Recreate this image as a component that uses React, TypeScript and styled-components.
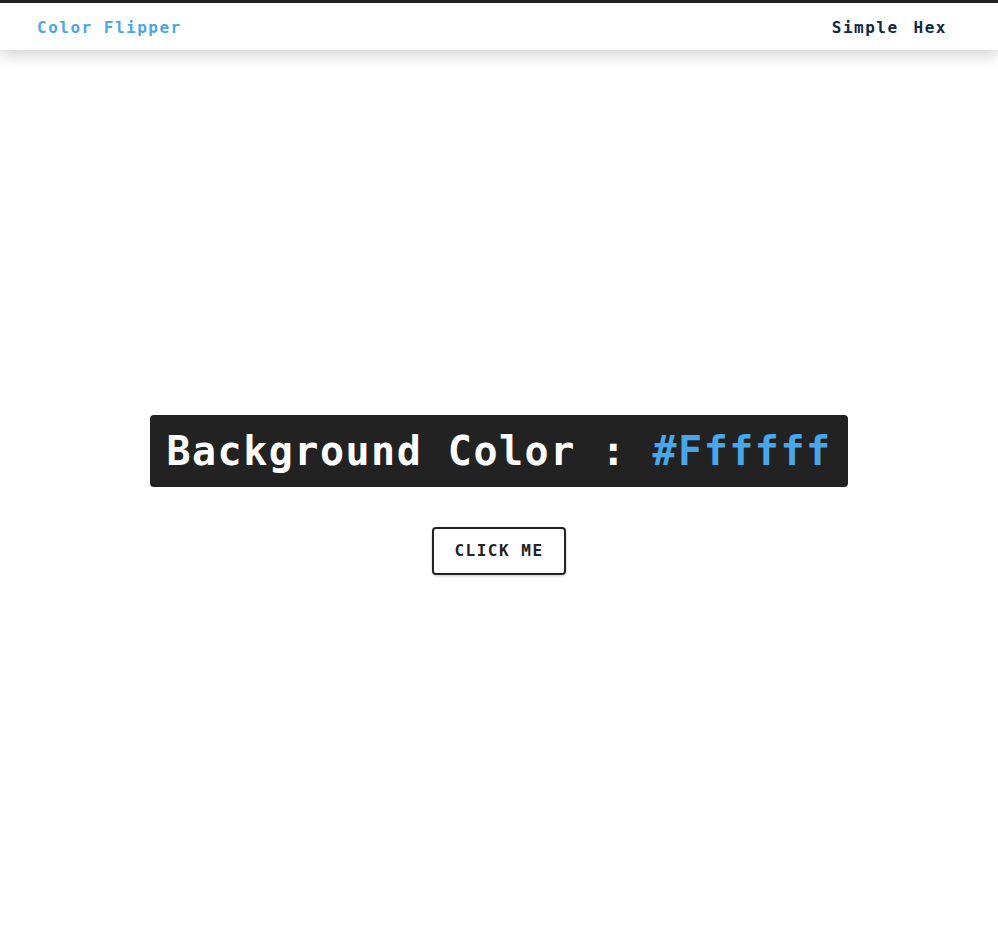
import React from "react";
import styled, { createGlobalStyle } from "styled-components";

const Global = createGlobalStyle`
  *, *::before, *::after { box-sizing: border-box; }
  html, body { margin: 0; padding: 0; background: #ffffff; }
  body {
    font-family: "DejaVu Sans Mono", "Liberation Mono", monospace;
    color: #222222;
  }
`;

const Nav = styled.nav`
  height: 50px;
  border-top: 3px solid #222222;
  background: #ffffff;
  box-shadow: 0 5px 15px rgba(0, 0, 0, 0.18);
  display: flex;
  align-items: center;
  justify-content: space-between;
  padding: 2px 51px 0 37px;
  position: relative;
  z-index: 1;
`;

const Brand = styled.h4`
  margin: 0;
  font-size: 16px;
  font-weight: 700;
  letter-spacing: 1.5px;
  color: #49a6e9;
  line-height: 20px;
`;

const Links = styled.ul`
  list-style: none;
  margin: 0;
  padding: 0;
  display: flex;
  gap: 15px;
`;

const LinkItem = styled.li`
  font-size: 16px;
  font-weight: 700;
  letter-spacing: 1.5px;
  color: #102a42;
  line-height: 20px;
`;

const Main = styled.main`
  min-height: calc(100vh - 50px);
  padding-top: 15px;
  display: flex;
  flex-direction: column;
  align-items: center;
  justify-content: center;
`;

const Banner = styled.h2`
  margin: 0 0 40px;
  background: #222222;
  color: #ffffff;
  padding: 16px;
  border-radius: 4px;
  font-size: 40px;
  line-height: 40px;
  font-weight: 700;
  letter-spacing: 1.5px;
  white-space: nowrap;
`;

const HexValue = styled.span`
  color: #49a6e9;
`;

const HeroButton = styled.button`
  font-family: inherit;
  font-size: 16px;
  line-height: 20px;
  font-weight: 700;
  letter-spacing: 1.5px;
  text-transform: uppercase;
  color: #222222;
  background: transparent;
  border: 2px solid #222222;
  border-radius: 4px;
  padding: 12px 20px;
  box-shadow: 0 1px 3px rgba(0, 0, 0, 0.2);
  cursor: pointer;
`;

export default function App() {
  return (
    <>
      <Global />
      <Nav>
        <Brand>Color Flipper</Brand>
        <Links>
          <LinkItem>Simple</LinkItem>
          <LinkItem>Hex</LinkItem>
        </Links>
      </Nav>
      <Main>
        <Banner>
          Background Color : <HexValue>#Ffffff</HexValue>
        </Banner>
        <HeroButton>click me</HeroButton>
      </Main>
    </>
  );
}
